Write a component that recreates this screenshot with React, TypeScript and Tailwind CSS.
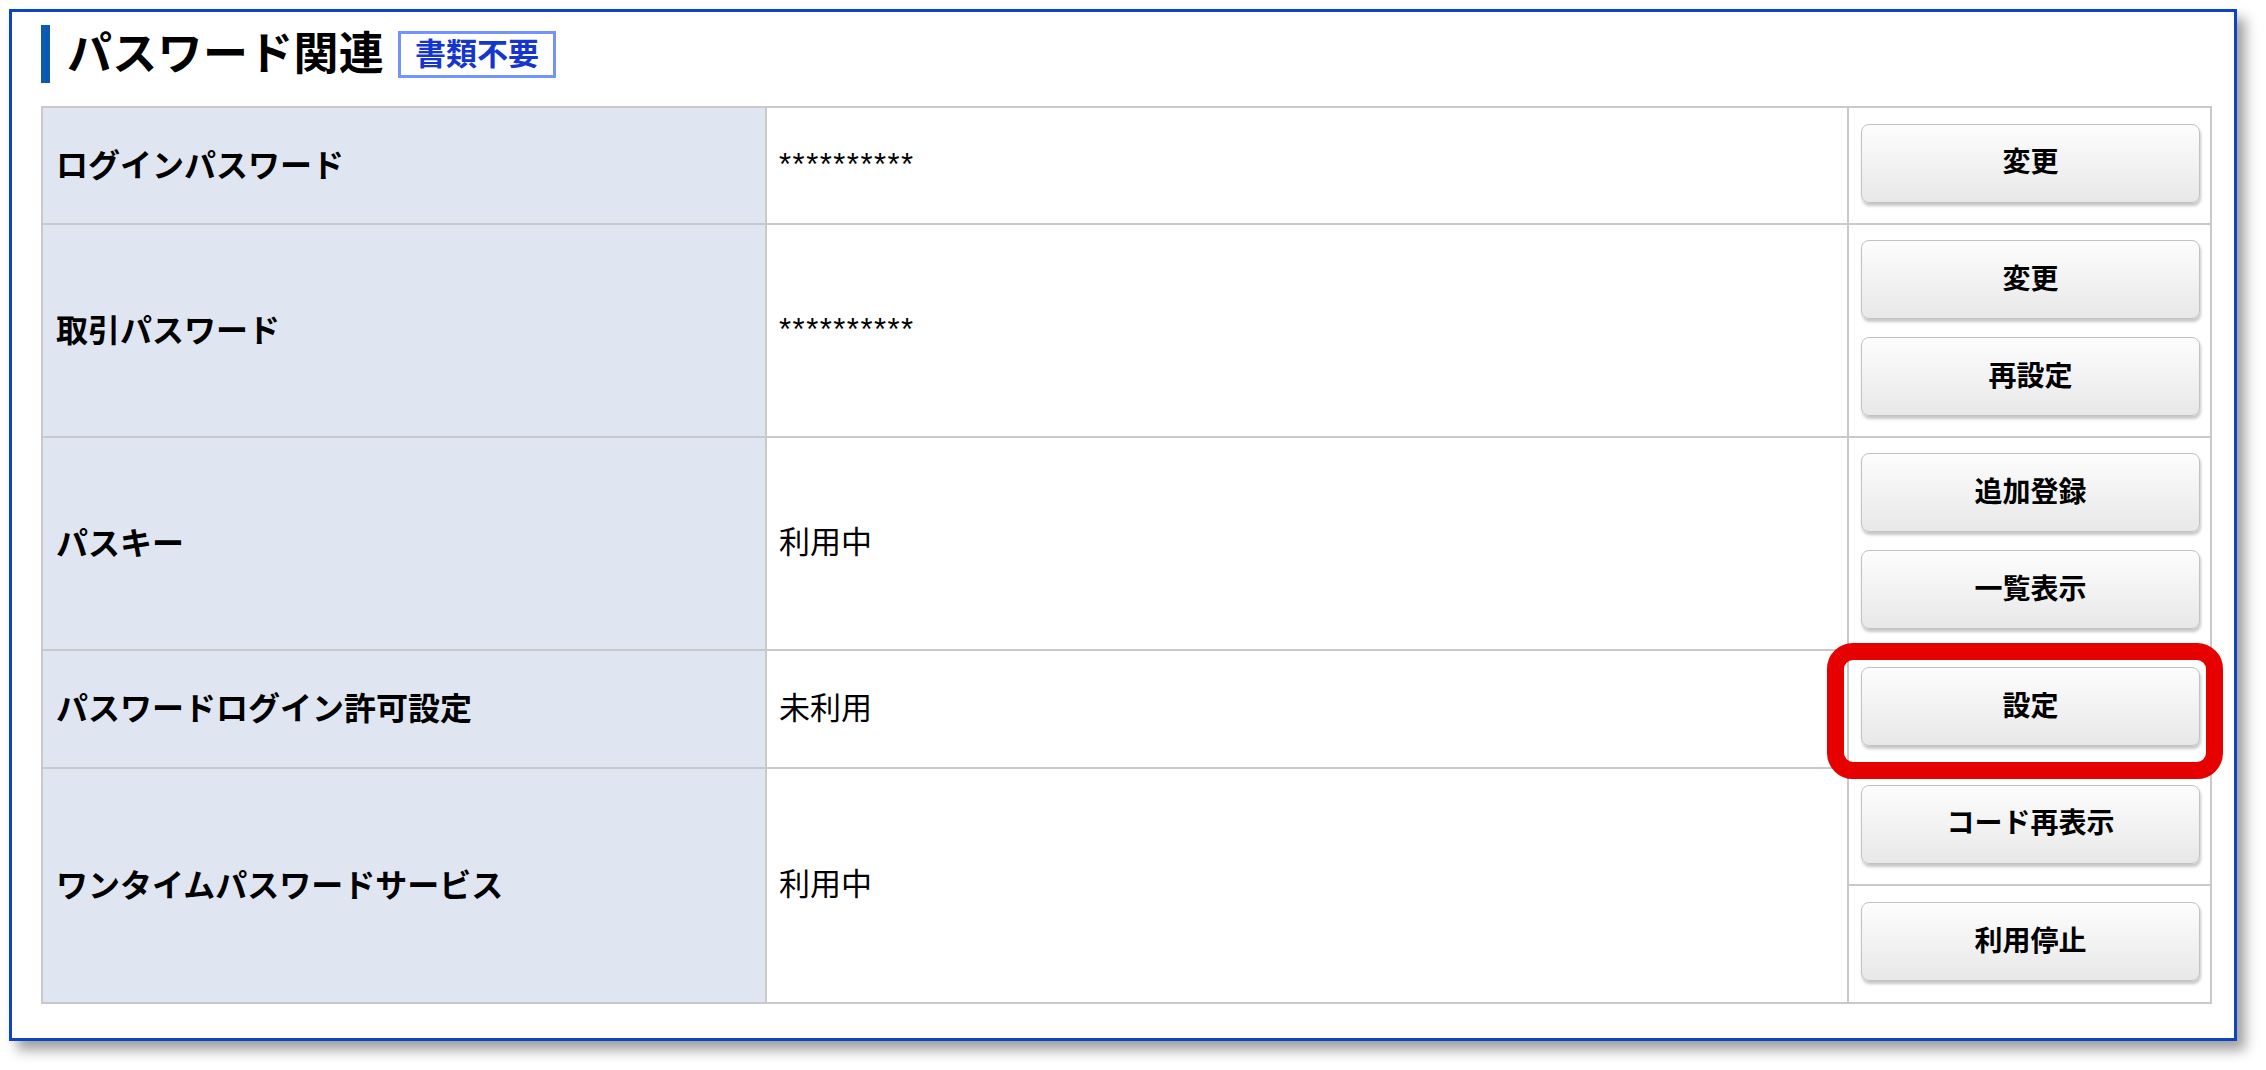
import React from "react";

type Row = {
  label: string;
  value: string;
  buttons: string[];
  h: string;
};

const rows: Row[] = [
  { label: "ログインパスワード", value: "**********", buttons: ["変更"], h: "h-[117px]" },
  { label: "取引パスワード", value: "**********", buttons: ["変更", "再設定"], h: "h-[213px]" },
  { label: "パスキー", value: "利用中", buttons: ["追加登録", "一覧表示"], h: "h-[213px]" },
];

const Btn = ({ children }: { children: React.ReactNode }) => (
  <button className="w-[339px] h-[79px] rounded-[8px] border border-[#c2c2c2] bg-linear-to-b from-[#fdfdfd] to-[#e8e8e8] shadow-[1px_3px_3px_rgba(0,0,0,0.22)] text-[28px] font-bold text-black">
    {children}
  </button>
);

const cell = "border-2 border-[#c9c9c9]";
const th = `${cell} bg-[#dfe6f1] pl-[13px] text-[32px] font-bold text-left align-middle`;
const td = `${cell} pl-[12px] text-[31px] align-middle`;
const btnCell = `${cell} pl-[12px] pb-[5px] align-middle`;

const App = () => {
  return (
    <div className="w-[2266px] h-[1070px] bg-white overflow-hidden pl-[9px] pt-[9px] font-['Liberation_Sans','Noto_Sans_CJK_JP',sans-serif] text-black">
      <div className="w-[2228px] h-[1032px] border-[3px] border-[#0b45c0] bg-white shadow-[8px_9px_12px_rgba(0,0,0,0.38)] pl-[29px] pt-[13px]">
        {/* title */}
        <div className="flex items-center h-[58px]">
          <div className="w-[9px] h-[58px] bg-[#0d58b0]" />
          <h2 className="ml-[17px] text-[45px] font-bold leading-none tracking-[0.3px]">
            パスワード関連
          </h2>
          <span className="ml-[14px] h-[47px] px-[14px] flex items-center border-[3px] border-[#7393ff] text-[31px] font-bold text-[#1535cf] leading-none">
            書類不要
          </span>
        </div>

        <table className="mt-[23px] w-[2169px] table-fixed border-collapse">
          <colgroup>
            <col className="w-[724px]" />
            <col className="w-[1082px]" />
            <col className="w-[363px]" />
          </colgroup>
          <tbody>
            {rows.map((r) => (
              <tr key={r.label} className={r.h}>
                <th className={th}>{r.label}</th>
                <td className={td}>
                  {r.value.startsWith("*") ? (
                    <span className="tracking-[1.5px]">{r.value}</span>
                  ) : (
                    r.value
                  )}
                </td>
                <td className={btnCell}>
                  <div className="flex flex-col gap-[18px]">
                    {r.buttons.map((b) => (
                      <Btn key={b}>{b}</Btn>
                    ))}
                  </div>
                </td>
              </tr>
            ))}
            <tr className="h-[118px]">
              <th className={th}>パスワードログイン許可設定</th>
              <td className={td}>未利用</td>
              <td className={btnCell}>
                <div className="relative w-[339px]">
                  <Btn>設定</Btn>
                  <div className="absolute -left-[34px] -top-[24px] -right-[23px] -bottom-[33px] border-[17px] border-[#e60000] rounded-[26px] pointer-events-none" />
                </div>
              </td>
            </tr>
            <tr className="h-[117px]">
              <th className={th} rowSpan={2}>
                ワンタイムパスワードサービス
              </th>
              <td className={td} rowSpan={2}>
                利用中
              </td>
              <td className={btnCell}>
                <Btn>コード再表示</Btn>
              </td>
            </tr>
            <tr className="h-[118px]">
              <td className={btnCell}>
                <Btn>利用停止</Btn>
              </td>
            </tr>
          </tbody>
        </table>
      </div>
    </div>
  );
};

export default App;
